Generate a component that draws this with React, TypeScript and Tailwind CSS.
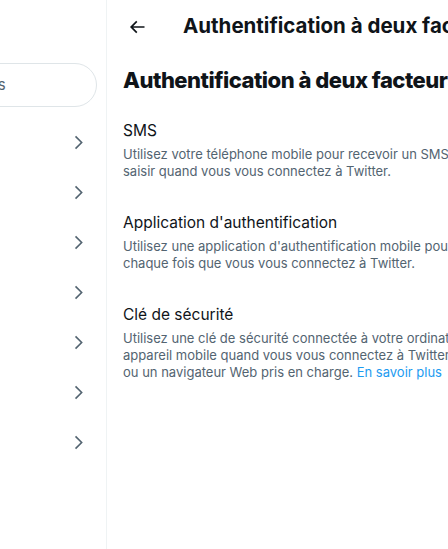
import React from "react";

const ChevronRight = () => (
  <svg viewBox="0 0 24 24" className="h-[19px] w-[19px] fill-[#536471]">
    <path d="M14.586 12L7.543 4.96l1.414-1.42L17.414 12l-8.457 8.46-1.414-1.42L14.586 12z" />
  </svg>
);

const ArrowLeft = () => (
  <svg viewBox="0 0 24 24" className="h-5 w-5 fill-[#0f1419]">
    <path d="M7.414 13l5.043 5.04-1.414 1.42L3.586 12l7.457-7.46 1.414 1.42L7.414 11H21v2H7.414z" />
  </svg>
);

const settingsMenu = [
  "Votre compte",
  "Twitter Blue",
  "Sécurité",
  "Confidentialité",
  "Notifications",
  "Accessibilité",
  "Ressources",
];

const methods = [
  {
    title: "SMS",
    lines: [
      "Utilisez votre téléphone mobile pour recevoir un SMS contenant un code d'authentification à",
      "saisir quand vous vous connectez à Twitter.",
    ],
  },
  {
    title: "Application d'authentification",
    lines: [
      "Utilisez une application d'authentification mobile pour obtenir un code de vérification à saisir",
      "chaque fois que vous vous connectez à Twitter.",
    ],
  },
  {
    title: "Clé de sécurité",
    lines: [
      "Utilisez une clé de sécurité connectée à votre ordinateur ou synchronisée à votre",
      "appareil mobile quand vous vous connectez à Twitter. Vous aurez besoin d'utiliser un appareil mobile",
    ],
    last: "ou un navigateur Web pris en charge.",
  },
];

export default function App() {
  return (
    <div className="h-[549px] w-[448px] overflow-hidden bg-white font-['Inter',sans-serif] text-[#0f1419]">
      <div className="-ml-[273px] flex h-full w-[1100px]">
        {/* settings list */}
        <aside className="flex h-full w-[380px] shrink-0 flex-col border-r border-[#eff3f4]">
          <div className="h-[63px]" />
          <div className="mr-[9px] ml-4 flex h-[44px] items-center rounded-full border border-[#dfe5e8] pl-[32px] text-[15px] text-[#536471]">
            <span>Rechercher dans les paramètres</span>
          </div>
          <div className="h-[10px]" />
          {settingsMenu.map((label) => (
            <div key={label} className="flex h-[50px] items-center justify-between pr-[18px] pl-4">
              <span className="text-[15px]">{label}</span>
              <ChevronRight />
            </div>
          ))}
        </aside>

        {/* two-factor panel */}
        <main className="flex-1">
          <header className="flex h-[53px] items-center">
            <div className="flex w-[76px] items-center pl-5">
              <ArrowLeft />
            </div>
            <h1 className="text-[20.5px] font-bold">Authentification à deux facteurs</h1>
          </header>
          <h2 className="px-4 pt-[12px] text-[22px] leading-[30px] font-extrabold tracking-[-0.5px]">
            Authentification à deux facteurs
          </h2>
          <div className="mt-[26px] flex flex-col gap-[33px] px-4">
            {methods.map((m) => (
              <div key={m.title}>
                <div className="text-[15.5px] leading-[20px]">{m.title}</div>
                <div className="mt-[5px] text-[13px] leading-[17px] text-[#536471]">
                  {m.lines.map((l) => (
                    <div key={l} className="whitespace-nowrap">{l}</div>
                  ))}
                  {m.last && (
                    <div className="whitespace-nowrap">
                      {m.last} <span className="text-[#1d9bf0]">En savoir plus</span>
                    </div>
                  )}
                </div>
              </div>
            ))}
          </div>
        </main>
      </div>
    </div>
  );
}
